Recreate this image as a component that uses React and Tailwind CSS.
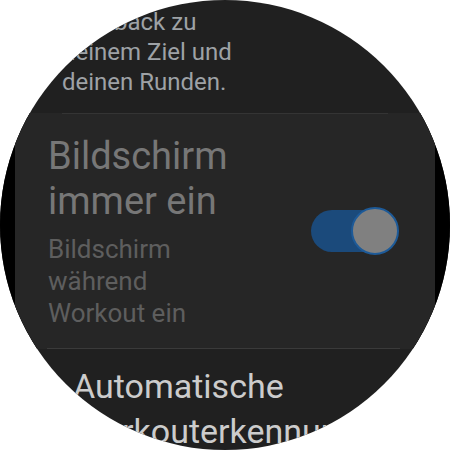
import React from 'react'

const Toggle = ({ on }) => (
    <div className="relative w-[88px] h-[48px] flex items-center">
        <div className={`w-[86px] h-[42px] rounded-full ${on ? 'bg-[#1b4a7b]' : 'bg-[#4a4a4a]'}`} />
        <div className="absolute right-0 top-0 w-[48px] h-[48px] rounded-full bg-[#808080] border-2 border-[#1d5a98]" />
    </div>
)

const App = () => {
    return (
        <div className="w-[450px] h-[450px] bg-white" style={{ fontFamily: 'Roboto, "Noto Sans", sans-serif' }}>
            <div className="w-[450px] h-[450px] rounded-full overflow-hidden bg-[#202020] flex flex-col">
                {/* Previous item description */}
                <div className="mt-[7px] pl-[62px] text-[24px] leading-[30px] text-[#9ea2a6]">
                    <p>Feedback zu</p>
                    <p>deinem Ziel und</p>
                    <p>deinen Runden.</p>
                </div>

                {/* Focused item */}
                <div className="mt-[16px] bg-black flex justify-center">
                    <div className="w-[420px] bg-[#262626] flex flex-col">
                        <div className="mx-[47px] h-px bg-[#343434]" />
                        <div className="flex items-center justify-between pl-[33px] pr-[36px] pt-[20px] pb-[19px]">
                            <div>
                                <p className="text-[38px] leading-[45px] text-[#777777]">
                                    Bildschirm<br />immer ein
                                </p>
                                <p className="mt-[8.5px] text-[26px] leading-[32px] text-[#5e5e5e]">
                                    Bildschirm<br />während<br />Workout ein
                                </p>
                            </div>
                            <Toggle on />
                        </div>
                        <div className="ml-[32px] mr-[35px] h-px bg-[#3a3a3a]" />
                    </div>
                </div>

                {/* Next item */}
                <div className="mt-[15px] pl-[73px] text-[34px] leading-[45px] text-[#cccccc]">
                    <p>Automatische</p>
                    <p>Workouterkennung</p>
                </div>
            </div>
        </div>
    )
}

export default App
